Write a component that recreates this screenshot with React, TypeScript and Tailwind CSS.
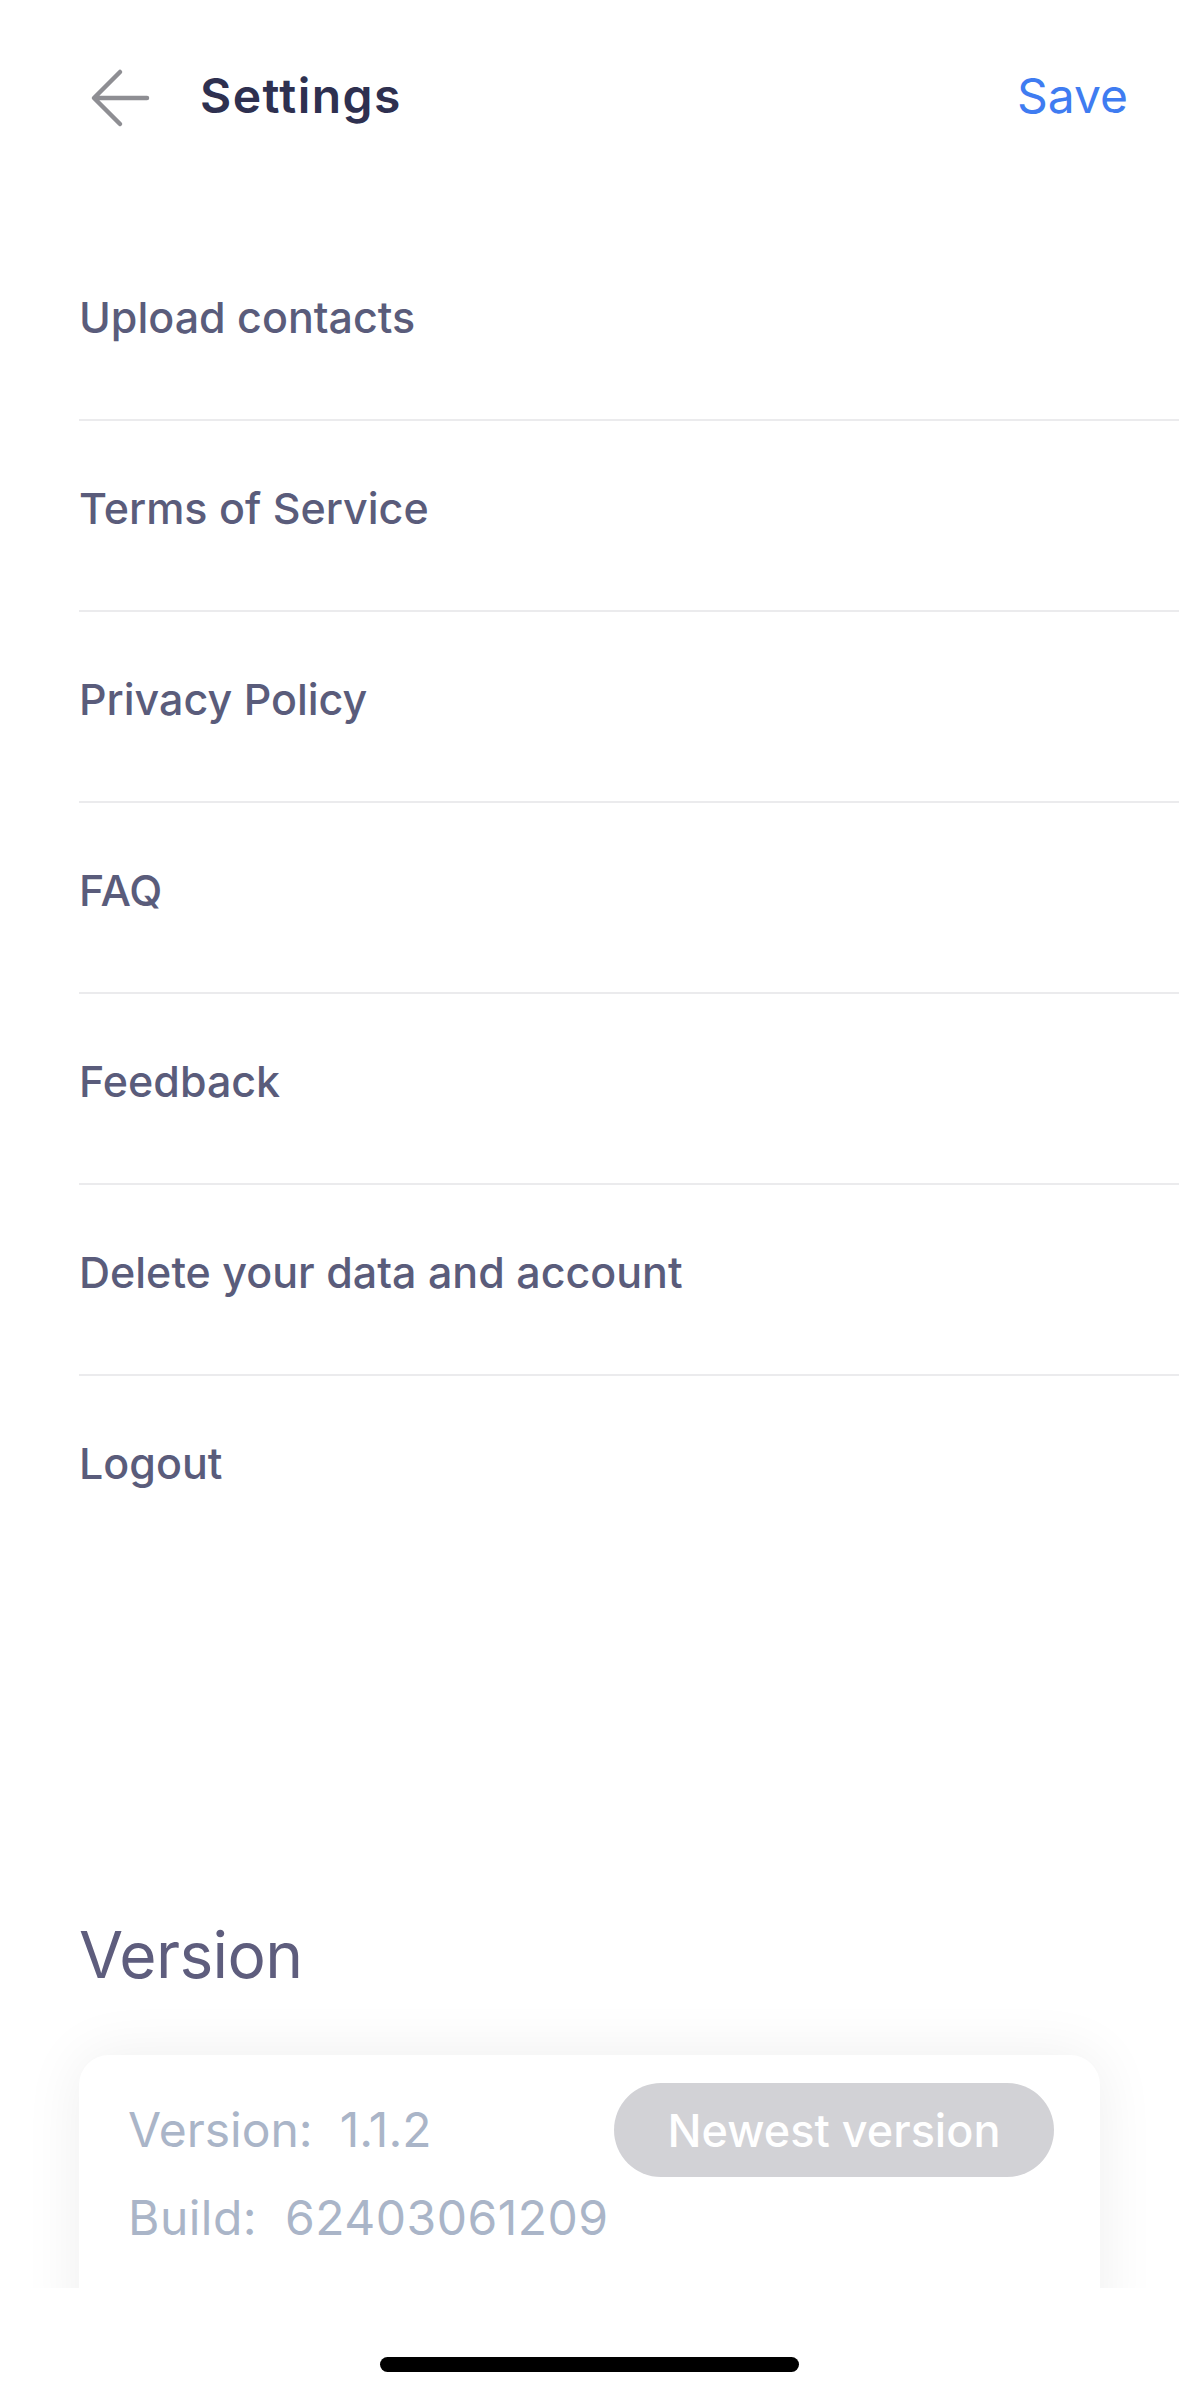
const items = [
  'Upload contacts',
  'Terms of Service',
  'Privacy Policy',
  'FAQ',
  'Feedback',
  'Delete your data and account',
  'Logout',
];

function BackArrow() {
  return (
    <svg width="60" height="60" viewBox="0 0 60 60" fill="none">
      <path
        d="M57 30H5M30 4L4 30L30 56"
        stroke="#8e8e93"
        strokeWidth="4.5"
        strokeLinecap="round"
        strokeLinejoin="round"
      />
    </svg>
  );
}

export default function App() {
  return (
    <div
      className="relative w-[1179px] h-[2396px] bg-white overflow-hidden"
      style={{ fontFamily: 'Inter, "Noto Sans", sans-serif' }}
    >
      <div className="h-[2288px] overflow-hidden flex flex-col">
        {/* Header */}
        <div className="h-[196px] pl-[90px] pr-[51px] flex items-center shrink-0">
          <BackArrow />
          <h1 className="ml-[50px] -mt-[4px] text-[48px] leading-none tracking-[0.03em] font-semibold text-[#2e3050]">Settings</h1>
          <button className="ml-auto -mt-[4px] text-[48px] leading-none text-[#3f7cf1]">Save</button>
        </div>

        {/* Settings list */}
        <div className="mt-[34px] pl-[79px] shrink-0">
          {items.map((label, i) => (
            <div key={label}>
              <div className="h-[189px] pt-[65px]">
                <span className="text-[43px] leading-[44px] font-medium text-[#5a5c7b]">{label}</span>
              </div>
              {i < items.length - 1 && <div className="h-[2px] bg-[#ebebed]" />}
            </div>
          ))}
        </div>

        {/* Version */}
        <div className="mt-[358px] px-[79px] shrink-0">
          <h2 className="text-[64px] leading-none tracking-[-0.01em] text-[#5e5d7d]">Version</h2>
          <div className="mt-[68px] h-[300px] rounded-[30px] bg-white shadow-[0_0_60px_rgba(0,0,0,0.07)] pt-[28px] pl-[49px] pr-[46px]">
            <div className="flex items-center justify-between h-[94px]">
              <span className="text-[48px] leading-[48px] text-[#aab5c8] whitespace-pre">Version:  1.1.2</span>
              <span className="w-[440px] h-[94px] rounded-full bg-[#d2d2d6] flex items-center justify-center text-[45px] leading-none font-medium text-white">
                Newest version
              </span>
            </div>
            <div className="mt-[17px] text-[48px] leading-[48px] tracking-[0.01em] text-[#aab5c8] whitespace-pre">Build:  62403061209</div>
          </div>
        </div>
      </div>

      {/* Home indicator */}
      <div className="flex justify-center mt-[69px]">
        <div className="w-[419px] h-[15px] rounded-full bg-black" />
      </div>
    </div>
  );
}
